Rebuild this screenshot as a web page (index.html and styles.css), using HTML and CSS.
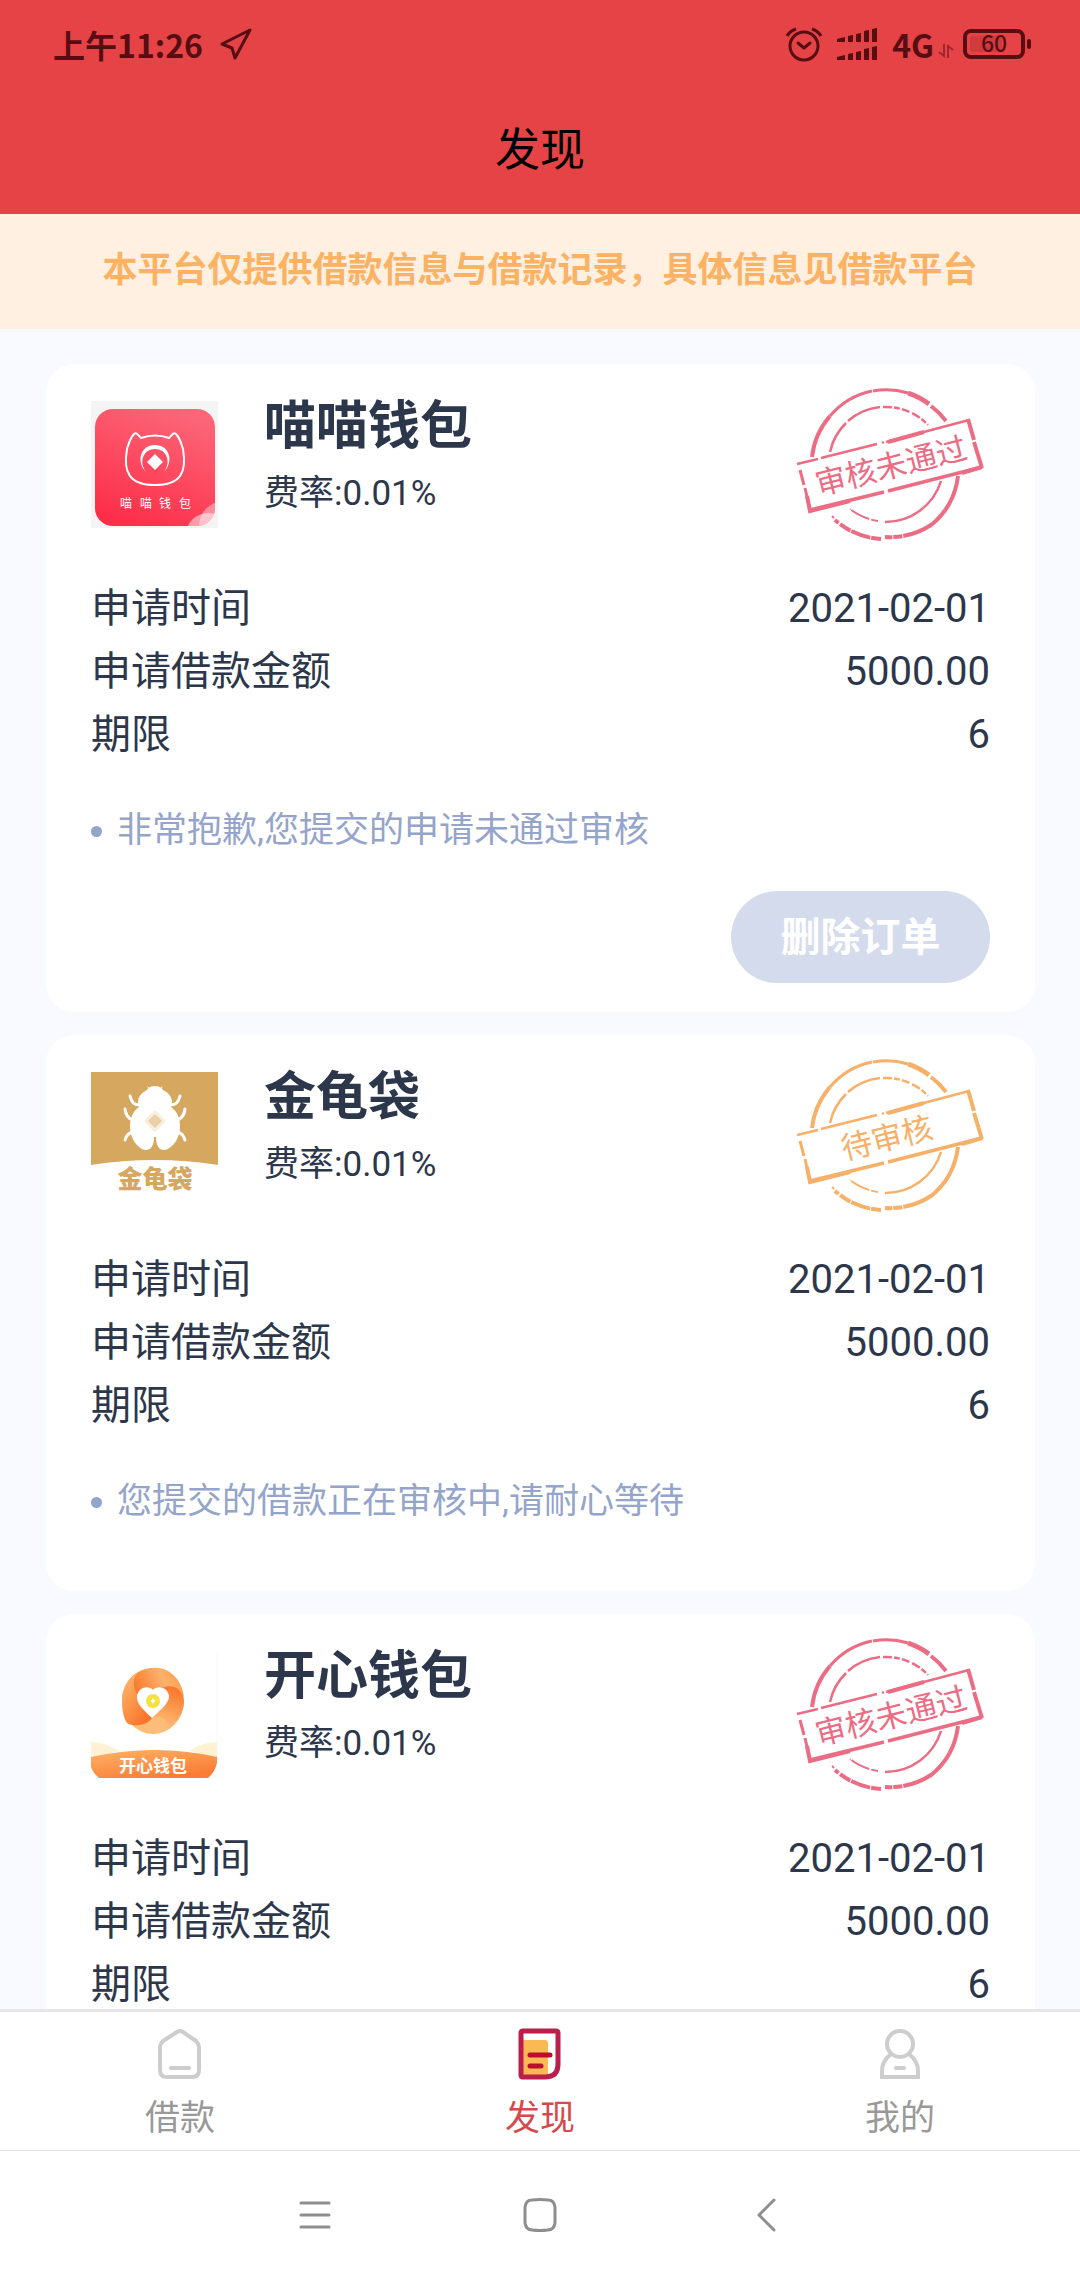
FILE: index.html
```html
<!DOCTYPE html>
<html lang="zh-CN">
<head>
  <meta charset="UTF-8" />
  <meta name="viewport" content="width=device-width, initial-scale=1.0" />
  <title>发现</title>
  <link rel="stylesheet" href="styles.css">
</head>
<body>
  <!-- shared stamp frame, colour comes from .stamp -->
  <svg class="defs" width="0" height="0" aria-hidden="true">
    <symbol id="stamp-frame" viewBox="0 0 200 170">
      <g fill="none" stroke="currentColor">
        <path d="M22 77A75 75 0 0 1 40 36" stroke-width="4" />
        <path d="M40 36A75 75 0 0 1 82 11" stroke-width="3" />
        <path d="M83 11A75 75 0 0 1 118 13" stroke-width="3" />
        <path d="M118 13A75 75 0 0 1 139 24" stroke-width="5" />
        <path d="M141 26A75 75 0 0 1 156 41" stroke-width="4" />
        <path d="M40 72A58 58 0 0 1 56 43M58 41A58 58 0 0 1 90 27" stroke-width="2.5" />
        <path d="M93 27A58 58 0 0 1 138 45" stroke-width="2.5" stroke-dasharray="9 2 6 2 8 3" />
        <path d="M168 96A75 75 0 0 1 140 146" stroke-width="4" />
        <path d="M141 145A75 75 0 0 1 95 157" stroke-width="4" stroke-dasharray="30 1 9 1" />
        <path d="M91 159A75 75 0 0 1 45 140" stroke-width="4" stroke-dasharray="10 1 20 1 12 2" />
        <path d="M42 136l2 2" stroke-width="2" />
        <path d="M151 101A58 58 0 0 1 95 142" stroke-width="2.5" />
        <path d="M88 141A58 58 0 0 1 60 129" stroke-width="2" stroke-dasharray="7 2 20 1" />
        <path d="M7 84L28 79M31 78L87 64M92 63L94 62M96 62L179 40" stroke-width="2.5" />
        <path d="M98 62L134 52" stroke-width="4" />
        <path d="M178 39L184 60M184 62L192 88" stroke-width="4" />
        <path d="M192 87L98 111M94 112L20 130" stroke-width="3.5" />
        <path d="M60 121L20 131L17 116M192 87L172 93" stroke-width="4" />
        <path d="M10 90L14 105M15 108L20 130" stroke-width="3" />
      </g>
    </symbol>
  </svg>

  <header class="top">
    <div class="status">
      <div class="status-left">
        <span>上午11:26</span>
        <svg width="32" height="32" viewBox="0 0 32 32"><path d="M30 2L2 16L12 20L15 30Z" fill="none" stroke="currentColor" stroke-width="3" stroke-linejoin="round" /></svg>
      </div>
      <div class="status-right">
        <svg width="36" height="36" viewBox="0 0 36 36" fill="none" stroke="currentColor" stroke-width="3">
          <circle cx="18" cy="20" r="14" />
          <path d="M12 17l6 5 6-5" stroke-linecap="round" stroke-linejoin="round" />
          <path d="M1 10Q4 5 10 3M35 10Q32 5 26 3" />
        </svg>
        <svg class="signal" width="40" height="32" viewBox="0 0 40 32" fill="currentColor">
          <path d="M0 11l8-2v5H0zM11 8l5-1v7h-5zM19 6l5-1v9h-5zM27 3l5-1v12h-5zM35 1l5-1v14h-5z" />
          <path d="M0 29l8-2v5H0zM11 26l5-1v7h-5zM19 24l5-1v9h-5zM27 21l5-1v12h-5zM35 19l5-1v14h-5z" />
        </svg>
        <span>4G</span>
        <svg class="updown" width="14" height="14" viewBox="0 0 14 14" fill="none" stroke="currentColor" stroke-width="2"><path d="M5 0v12L0 8M9 14V2l5 4" /></svg>
        <svg class="battery" width="68" height="30" viewBox="0 0 68 30">
          <rect x="7" y="7" width="32" height="16" rx="3" fill="#d03b3f" />
          <rect x="2" y="2" width="58" height="26" rx="6" fill="none" stroke="currentColor" stroke-width="4" />
          <rect x="64" y="10" width="4" height="10" rx="2" fill="currentColor" />
          <text x="31" y="23" text-anchor="middle">60</text>
        </svg>
      </div>
    </div>
    <h1>发现</h1>
  </header>

  <p class="notice">本平台仅提供借款信息与借款记录，具体信息见借款平台</p>

  <main>
    <article class="card">
      <div class="card-head">
        <svg class="logo" viewBox="0 0 127 127">
          <defs>
            <linearGradient id="pink" x1="0.7" y1="0" x2="0.3" y2="1">
              <stop offset="0" stop-color="#fc6678" />
              <stop offset="1" stop-color="#fe2e49" />
            </linearGradient>
            <clipPath id="pinkClip"><rect x="4" y="8" width="120" height="117" rx="18" /></clipPath>
          </defs>
          <rect width="127" height="127" fill="#f4f4f4" />
          <g clip-path="url(#pinkClip)">
            <rect x="4" y="8" width="120" height="117" fill="url(#pink)" />
            <circle cx="133" cy="125" r="25" fill="#fff" opacity="0.4" />
            <circle cx="117" cy="134" r="22" fill="#fff" opacity="0.5" />
          </g>
          <path d="M50 37Q64 32 78 37C81 34 82 31 85 33C89 37 90 42 92 48C96 71 90 84 64 84C38 84 32 71 36 48C38 42 39 37 43 33C46 31 47 34 50 37Z" fill="none" stroke="#fff" stroke-width="2" />
          <path d="M55 71C45 61 49 44 64 44C79 44 83 61 73 71C81 60 75 48 64 48C53 48 47 60 55 71Z" fill="#fff" />
          <path d="M64 53l8 8-8 8-8-8z" fill="#fff" />
          <text class="logo-cat" x="29 49 68 88" y="107">喵喵钱包</text>
        </svg>
        <div class="info">
          <h2>喵喵钱包</h2>
          <p>费率:0.01%</p>
        </div>
        <svg class="stamp rejected" viewBox="0 0 200 170">
          <use href="#stamp-frame" />
          <text x="101" y="97" transform="rotate(-14 101 86)">审核未通过</text>
        </svg>
      </div>
      <dl>
        <div><dt>申请时间</dt><dd>2021-02-01</dd></div>
        <div><dt>申请借款金额</dt><dd>5000.00</dd></div>
        <div><dt>期限</dt><dd>6</dd></div>
      </dl>
      <p class="tip">非常抱歉,您提交的申请未通过审核</p>
      <button type="button" class="delete-btn">删除订单</button>
    </article>

    <article class="card">
      <div class="card-head">
        <svg class="logo" viewBox="0 0 127 127">
          <path d="M0 0H127V93Q64 83 0 93Z" fill="#d6a75f" />
          <g fill="none" stroke="#fff" stroke-width="3" stroke-linecap="round">
            <path d="M39 24Q41 33 48 33M34 37Q35 46 42 48M34 68Q36 61 42 60" />
            <path d="M89 24Q87 33 80 33M94 37Q93 46 86 48M94 68Q92 61 86 60" />
            <path d="M57 15l2 3M71 15l-2 3" stroke-width="1" />
          </g>
          <path d="M64 14C68 14 71 16 72 18C78 21 81 25 81 30L80 35C86 39 89 46 89 55C89 66 82 76 74 78C68 79 65 73 65 65H63C63 73 60 79 54 78C46 76 39 66 39 55C39 46 42 39 48 35L47 30C47 25 50 21 56 18C57 16 60 14 64 14Z" fill="#fff" />
          <rect x="56" y="41" width="16" height="16" rx="2" transform="rotate(45 64 49)" fill="#faeee0" />
          <rect x="59" y="44" width="10" height="10" rx="1" transform="rotate(45 64 49)" fill="#eccfa4" />
          <text class="logo-gold" x="64" y="116" text-anchor="middle">金龟袋</text>
        </svg>
        <div class="info">
          <h2>金龟袋</h2>
          <p>费率:0.01%</p>
        </div>
        <svg class="stamp pending" viewBox="0 0 200 170">
          <use href="#stamp-frame" />
          <text x="97" y="98" transform="rotate(-14 97 87)">待审核</text>
        </svg>
      </div>
      <dl>
        <div><dt>申请时间</dt><dd>2021-02-01</dd></div>
        <div><dt>申请借款金额</dt><dd>5000.00</dd></div>
        <div><dt>期限</dt><dd>6</dd></div>
      </dl>
      <p class="tip">您提交的借款正在审核中,请耐心等待</p>
    </article>

    <article class="card">
      <div class="card-head">
        <svg class="logo" viewBox="0 0 127 127">
          <defs>
            <linearGradient id="bladeTop" x1="0" y1="0.6" x2="1" y2="0.3">
              <stop offset="0" stop-color="#f97a2e" />
              <stop offset="0.6" stop-color="#fdb26a" />
              <stop offset="1" stop-color="#fb9a4c" />
            </linearGradient>
            <linearGradient id="bladeRight" x1="0.6" y1="0" x2="0.3" y2="1">
              <stop offset="0" stop-color="#f9762c" />
              <stop offset="0.6" stop-color="#fca55c" />
              <stop offset="1" stop-color="#fdc27e" />
            </linearGradient>
            <linearGradient id="bladeLeft" x1="0" y1="0" x2="0.7" y2="1">
              <stop offset="0" stop-color="#fec080" />
              <stop offset="0.5" stop-color="#fc9a4e" />
              <stop offset="1" stop-color="#f9722a" />
            </linearGradient>
            <linearGradient id="hill" x1="0" y1="0" x2="0.6" y2="1">
              <stop offset="0" stop-color="#fcb468" />
              <stop offset="1" stop-color="#fb7c34" />
            </linearGradient>
          </defs>
          <path d="M126 0V127" stroke="#f8f8f8" />
          <ellipse cx="62" cy="50" rx="31" ry="33" fill="#fdbd78" />
          <path d="M31 48C32 30 44 20 56 18C40 24 42 36 47 46C50 56 56 62 61 67C56 75 42 76 36 72C32 66 31 58 31 48Z" fill="url(#bladeLeft)" />
          <path d="M47 46C41 35 40 21 56 18C73 13 90 24 93 46C88 36 77 33 70 37L62 40Q50 36 47 46Z" fill="url(#bladeTop)" />
          <path d="M70 37C82 32 92 38 93 50C93 62 86 71 76 79C82 72 70 62 61 67L78 48Z" fill="url(#bladeRight)" />
          <path d="M62 39C58 34 47 36 46 45C45 53 54 60 61 67C68 60 78 53 78 45C77 36 66 34 62 39Z" fill="#fff" />
          <circle cx="62" cy="50" r="7" fill="#f9e13c" />
          <path d="M62 47l1 2 2 1-2 1-1 2-1-2-2-1 2-1z" fill="#fff" />
          <path d="M0 91Q14 91 28 100L0 108ZM126 91Q112 91 98 100L126 108Z" fill="#fef1d4" />
          <path d="M0 106Q64 92 126 106V112Q124 121 117 127H8Q2 122 0 116Z" fill="url(#hill)" />
          <text class="logo-happy" x="62" y="121" text-anchor="middle">开心钱包</text>
        </svg>
        <div class="info">
          <h2>开心钱包</h2>
          <p>费率:0.01%</p>
        </div>
        <svg class="stamp rejected" viewBox="0 0 200 170">
          <use href="#stamp-frame" />
          <text x="101" y="97" transform="rotate(-14 101 86)">审核未通过</text>
        </svg>
      </div>
      <dl>
        <div><dt>申请时间</dt><dd>2021-02-01</dd></div>
        <div><dt>申请借款金额</dt><dd>5000.00</dd></div>
        <div><dt>期限</dt><dd>6</dd></div>
      </dl>
    </article>
  </main>

  <nav class="tabs">
    <a href="#loan">
      <svg width="52" height="56" viewBox="0 0 52 56" fill="none" stroke="#cdcdcd" stroke-width="4" stroke-linecap="round" stroke-linejoin="round">
        <path d="M23 6Q26 4 29 6L42 15Q45 18 45 21V44Q45 51 38 51H13Q6 51 6 44V21Q6 18 9 15Z" />
        <path d="M17 42H35" />
      </svg>
      借款
    </a>
    <a href="#find" class="active">
      <svg width="52" height="56" viewBox="0 0 52 56">
        <path d="M8 14H31Q34 14 34 17V50H8Z" fill="#fab953" />
        <path d="M9 5H42Q44 5 44 7V38Q44 51 31 51H9Q7 51 7 49V7Q7 5 9 5Z" fill="none" stroke="#bb1e4c" stroke-width="5" />
        <path d="M16 29H36M16 40H27" stroke="#b90f2c" stroke-width="5" stroke-linecap="round" />
      </svg>
      发现
    </a>
    <a href="#mine">
      <svg width="52" height="56" viewBox="0 0 52 56" fill="none" stroke="#cdcdcd" stroke-width="4">
        <circle cx="26" cy="18" r="13" />
        <path d="M17 28Q8 35 8 45V51H44V45Q44 35 35 28" />
        <path d="M22 42H30" stroke-linecap="round" />
      </svg>
      我的
    </a>
  </nav>

  <div class="sysnav">
    <button type="button" aria-label="菜单">
      <svg width="34" height="34" viewBox="0 0 34 34"><path d="M3 5H31M3 17H31M3 29H31" /></svg>
    </button>
    <button type="button" aria-label="主页">
      <svg width="34" height="34" viewBox="0 0 34 34"><path d="M9 2Q17 1 25 2Q31 2 32 9Q32 17 32 25Q31 32 25 32Q17 33 9 32Q3 32 2 25Q2 17 2 9Q3 2 9 2Z" /></svg>
    </button>
    <button type="button" aria-label="返回">
      <svg width="34" height="34" viewBox="0 0 34 34"><path d="M26 2L11 17L26 32" /></svg>
    </button>
  </div>
</body>
</html>
```
FILE: styles.css
```css
* {
  box-sizing: border-box;
  margin: 0;
  padding: 0;
}

body {
  display: flex;
  flex-direction: column;
  height: 100vh;
  background-color: #fff;
  color: #2d374b;
  font-family: Roboto, "Noto Sans CJK SC", sans-serif;
}

svg {
  display: block;
  flex-shrink: 0;
  overflow: visible;
}

.defs {
  position: absolute;
}

/* header */
.top {
  background-color: #e64346;
  padding-bottom: 2px;
}

.status {
  display: flex;
  justify-content: space-between;
  align-items: center;
  height: 90px;
  padding: 0 49px 2px 53px;
  color: #560e12;
  font-family: "Noto Sans CJK SC", sans-serif;
  font-size: 32px;
  font-weight: 700;
  line-height: 44px;
}

.status-left,
.status-right {
  display: flex;
  align-items: center;
}

.status-left {
  gap: 17px;
}

.status-right {
  gap: 15px;
}

.status .updown {
  margin: 14px -5px 0 -10px;
  opacity: 0.5;
}

.battery text {
  fill: currentColor;
  font-size: 23px;
  font-weight: 500;
}

.top h1 {
  color: #000;
  font-size: 45px;
  font-weight: 400;
  line-height: 122px;
  text-align: center;
}

.notice {
  padding-bottom: 2px;
  background-color: #fff0e2;
  color: #fbb263;
  font-size: 35px;
  font-weight: 700;
  line-height: 113px;
  text-align: center;
}

/* order list */
main {
  flex: 1;
  min-height: 0;
  display: flex;
  flex-direction: column;
  gap: 23px;
  padding: 35px 45px 35px 46px;
  background-color: #f8faff;
  overflow-y: auto;
  scrollbar-width: none;
}

.card {
  flex-shrink: 0;
  padding: 37px 45px 29px;
  background-color: #fff;
  border-radius: 28px;
}

.card-head {
  display: flex;
  align-items: flex-start;
}

.logo {
  width: 127px;
  height: 127px;
}

.info {
  flex: 1;
  padding: 4px 0 0 46px;
}

.info h2 {
  font-size: 52px;
  font-weight: 700;
  line-height: 44px;
}

.info p {
  margin-top: 20px;
  font-size: 35px;
  line-height: 50px;
}

.logo text {
  font-family: "Noto Sans CJK SC", sans-serif;
}

.logo-cat {
  fill: #fff;
  font-size: 12px;
}

.logo-gold {
  fill: #d6a75f;
  font-size: 25px;
  font-weight: 900;
}

.logo-happy {
  fill: #fff;
  font-size: 17px;
  font-weight: 700;
}

.stamp {
  width: 200px;
  height: 170px;
  margin: -21px 0 -22px;
}

.stamp text {
  fill: currentColor;
  font-family: "Noto Sans CJK SC", sans-serif;
  font-size: 31px;
  font-weight: 400;
  text-anchor: middle;
}

.rejected {
  color: #ec6c84;
}

.pending {
  color: #f6b068;
}

dl {
  margin-top: 49px;
  font-size: 40px;
  line-height: 63px;
}

dl div {
  display: flex;
  justify-content: space-between;
}

.tip {
  display: flex;
  align-items: center;
  gap: 15px;
  margin: 40px 0 35px;
  color: #94a4ca;
  font-size: 35px;
  line-height: 50px;
}

.tip::before {
  content: "";
  width: 11px;
  height: 11px;
  border-radius: 50%;
  background-color: #94a4ca;
}

.delete-btn {
  display: block;
  margin-left: auto;
  width: 259px;
  height: 92px;
  padding-bottom: 6px;
  border: none;
  border-radius: 46px;
  background-color: #d4dbec;
  color: #fff;
  font-family: inherit;
  font-size: 40px;
  font-weight: 700;
  cursor: pointer;
}

/* bottom tabs */
.tabs {
  display: flex;
  border-top: 3px solid #e6e6e6;
}

.tabs a {
  flex: 1;
  display: flex;
  flex-direction: column;
  align-items: center;
  padding: 14px 0 6px;
  gap: 12px;
  color: #999;
  font-size: 35px;
  line-height: 50px;
  text-decoration: none;
}

.tabs a.active {
  color: #d44a4c;
}

.sysnav {
  display: flex;
  justify-content: center;
  height: 130px;
  padding-bottom: 2px;
  border-top: 1px solid #e2e2e2;
}

.sysnav button {
  display: flex;
  align-items: center;
  justify-content: center;
  width: 225px;
  border: none;
  background: none;
  cursor: pointer;
}

.sysnav path {
  fill: none;
  stroke: #8e8e8e;
  stroke-width: 3;
  stroke-linecap: round;
  stroke-linejoin: round;
}
```
